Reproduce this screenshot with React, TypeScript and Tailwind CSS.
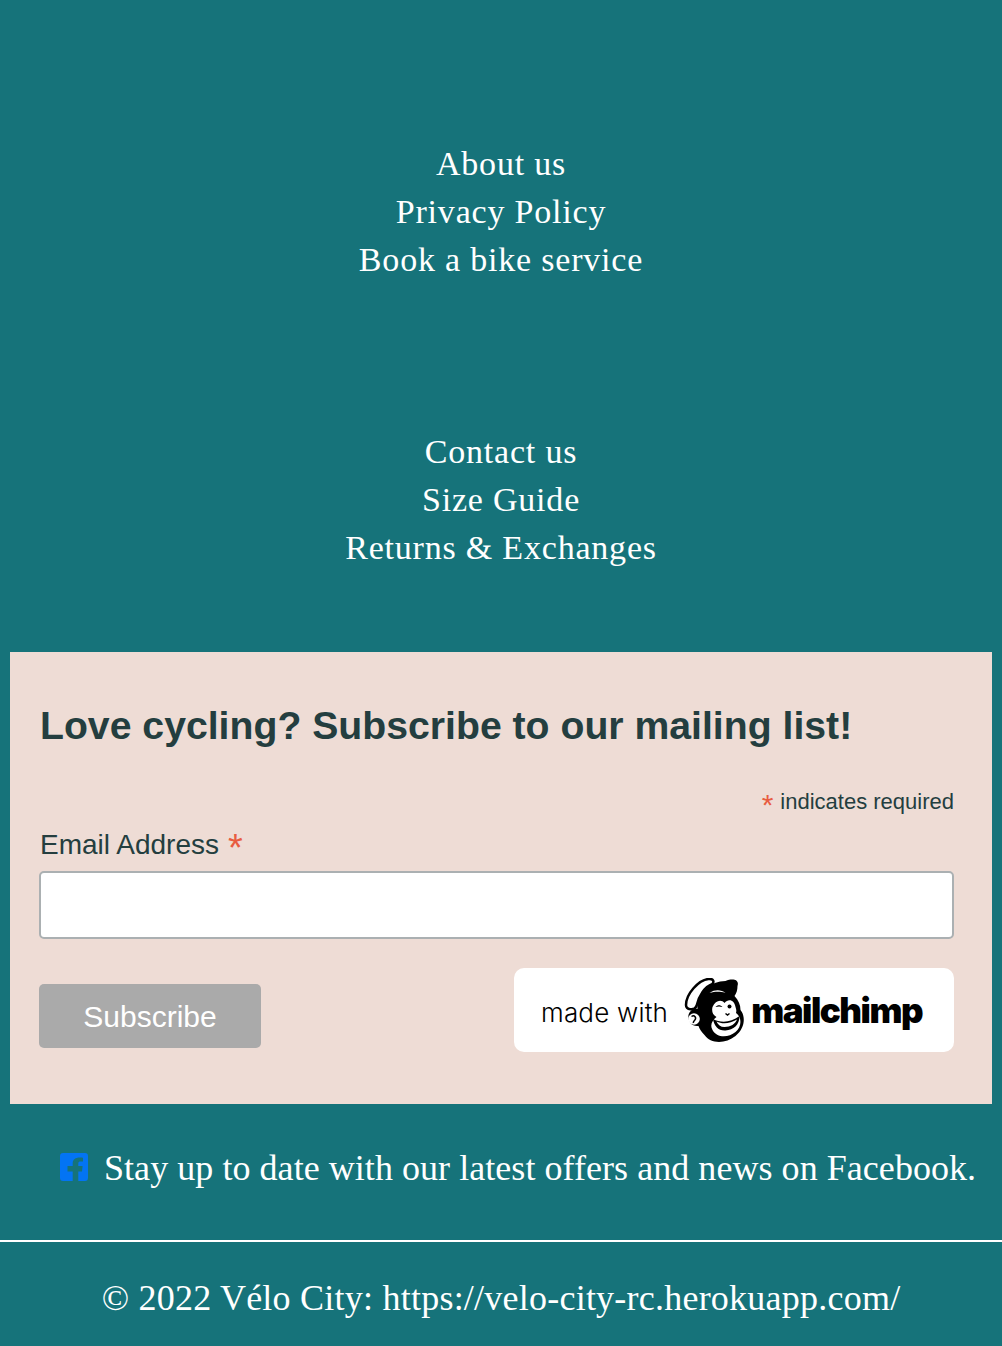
import React from "react";

const columns = [
  ["About us", "Privacy Policy", "Book a bike service"],
  ["Contact us", "Size Guide", "Returns & Exchanges"],
];

function Monkey() {
  return (
    <svg viewBox="0 0 60 65" className="w-[61px] h-[65px] shrink-0" aria-hidden="true">
      <path
        d="M13 31C12 15 26 3 41 3C49 0 55 2 53 8C53 12 52 15 50 18C54 22 56 27 56 32C61 38 61 50 51 58C41 66 26 66 20 57C17 54 15 51 14 48C7 49 3 43 4 37C5 33 9 30 13 31Z"
        fill="#000"
      />
      <path
        d="M1.500 27C1.500 16 14 2 24 1C28.500 .5 30 3 28 6C20 9 14 18 12 28C10 33 1.500 32 1.500 27Z"
        fill="#fff"
        stroke="#000"
        strokeWidth="2.500"
      />
      <circle cx="9.500" cy="41" r="5.800" fill="#fff" />
      <path d="M7 38.500C10 36.500 12.500 40 10 42.500C9 43.500 8.500 44 9 45" fill="none" stroke="#000" strokeWidth="1.500" />
      <path d="M25 15C31 11 37 12 41 15C34 13 30 14 25 15Z" fill="#fff" />
      <path
        d="M28 29C31 22 37 21 40 25C44 20 50 22 51 29C52 32 52 33 51.500 35C57 39 58 48 51 54C44 60 32 60 28 52C25 47 28 42 32 39C28 37 27 33 28 29Z"
        fill="#fff"
      />
      <path d="M31 29C33 26.500 36 26.500 38 29C35.500 28.300 33.500 28.300 31 29Z" fill="#000" />
      <circle cx="45" cy="28.500" r="2" fill="#000" />
      <path d="M41 35.500L43 37L45 35.500" fill="none" stroke="#000" strokeWidth="1.500" />
      <path
        d="M28.500 41C36 45 46 45 55 38C55 47 49 52 41 52.500C34 53 29.500 48 28.500 41Z"
        fill="#000"
      />
      <path d="M32 43.500C38 46.500 46 45.500 52.500 41.500C51 46 46 49 40 49C36 49 33.500 47 32 43.500Z" fill="#fff" />
    </svg>
  );
}

function FacebookIcon() {
  return (
    <svg viewBox="0 0 28 28" className="mb-[2px] w-7 h-7 shrink-0" aria-hidden="true">
      <path
        d="M3 0H25A3 3 0 0 1 28 3V25A3 3 0 0 1 25 28H18.300V18.500H22L22.600 13H18.300V10.500C18.300 9 19 8.500 20.600 8.500H23V4.800C22 4.600 21 4.500 19.600 4.500C15.600 4.500 12.700 6.600 12.700 10.300V13H7.500V18.500H12.700V28H3A3 3 0 0 1 0 25V3A3 3 0 0 1 3 0Z"
        fill="#0374f4"
      />
    </svg>
  );
}

export default function App() {
  return (
    <div className="min-h-[1346px] bg-[#16737a] font-['Liberation_Serif',serif] text-white">
      <div className="pt-[140px]">
        {columns.map((links, idx) => (
          <ul key={idx} className="mb-[144px] last:mb-0 text-center text-[34px] leading-[48px] tracking-[0.8px]">
            {links.map((link) => (
              <li key={link}>{link}</li>
            ))}
          </ul>
        ))}
      </div>

      <section className="mx-[10px] mt-[80px] h-[452px] bg-[#eedcd5] pl-[29px] pr-[38px] pt-[50px] font-['Liberation_Sans',sans-serif] text-[#243e3f]">
        <h2 className="pl-px text-[39.200px] leading-[48px] font-bold">Love cycling? Subscribe to our mailing list!</h2>
        <p className="mt-[39px] flex h-[26px] items-center justify-end gap-[7px] text-[22px] leading-[26px]">
          <span className="pt-[6px] text-[30px] leading-none text-[#e85c41]">*</span>
          <span>indicates required</span>
        </p>
        <label className="mt-[14px] flex h-[32px] items-center gap-[9px] pl-px text-[28px] leading-[32px]">
          <span>Email Address</span>
          <span className="pt-[6px] text-[38px] leading-none text-[#e85c41]">*</span>
        </label>
        <input
          type="text"
          className="mt-[10px] block h-[68px] w-full rounded-[5px] border-2 border-[#abb0b2] bg-white"
        />
        <div className="mt-[29px] flex items-end justify-between">
          <button className="mb-[4px] h-[64px] w-[222px] rounded-[5px] bg-[#aaaaaa] text-[30px] text-white">Subscribe</button>
          <div className="flex h-[84px] w-[440px] items-center rounded-[10px] bg-white pl-[27px] text-black">
            <span className="mr-[16px] pt-[4px] font-['Inter',sans-serif] text-[26px] font-light tracking-[0.2px]">made with</span>
            <Monkey />
            <span className="ml-[6px] font-['Inter',sans-serif] text-[35px] font-black tracking-[-1.5px]">mailchimp</span>
          </div>
        </div>
      </section>

      <p className="mt-[43px] flex items-center pl-[60px] text-[36px] leading-[42px] tracking-[0.05px] whitespace-nowrap">
        <FacebookIcon />
        <span className="ml-4">Stay up to date with our latest offers and news on Facebook.</span>
      </p>

      <hr className="mt-[51px] border-t-2 border-white" />

      <p className="mt-[35px] text-center text-[36px] leading-[42px] tracking-[0.23px]">© 2022 Vélo City: https://velo-city-rc.herokuapp.com/</p>
    </div>
  );
}
